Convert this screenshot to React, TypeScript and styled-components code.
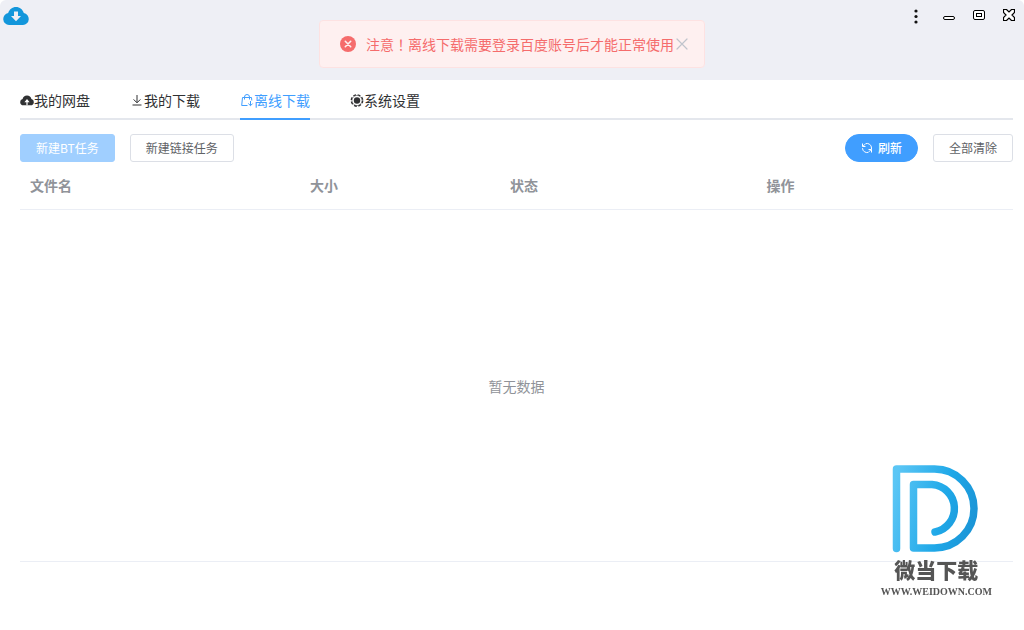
import React from "react";
import styled, { createGlobalStyle, css } from "styled-components";

const GlobalStyle = createGlobalStyle`
  * { box-sizing: border-box; }
  body {
    margin: 0;
    background: #fff;
    color: #303133;
    font: 14px/20px "Noto Sans CJK SC", sans-serif;
  }
  button { font-family: inherit; cursor: pointer; }
`;

const Window = styled.div`
  display: flex;
  flex-direction: column;
  min-height: 100vh;
`;

const TitleBar = styled.header`
  display: flex;
  justify-content: space-between;
  align-items: flex-start;
  height: 80px;
  padding: 6px 5px 0 3px;
  background: #eeeff5;
  border-radius: 6px 6px 0 0;
`;

const WindowControls = styled.div`
  display: flex;
  gap: 10px;
`;

const ControlButton = styled.button<{ $spaced?: boolean }>`
  display: flex;
  align-items: center;
  justify-content: center;
  width: 20px;
  height: 18px;
  margin-right: ${(p) => (p.$spaced ? "3px" : "0")};
  padding: 0;
  border: 0;
  background: none;
`;

const Message = styled.div`
  position: fixed;
  top: 20px;
  left: 50%;
  transform: translateX(-50%);
  display: flex;
  align-items: center;
  width: 386px;
  height: 48px;
  padding: 0 14px 0 20px;
  border: 1px solid #fde2e2;
  border-radius: 4px;
  background: #fef0f0;
  color: #f56c6c;
`;

const MessageText = styled.p`
  margin: 0 0 0 10px;
  white-space: nowrap;
`;

const CenteredMark = styled.span`
  font-family: "Noto Sans CJK TC", sans-serif;
`;

const MessageClose = styled.button`
  display: flex;
  padding: 0;
  border: 0;
  background: none;
  color: #c0c4cc;
`;

const Main = styled.main`
  flex: 1;
  padding: 0 11px 0 20px;
`;

const Tabs = styled.nav`
  display: flex;
  gap: 40px;
  height: 40px;
  box-shadow: inset 0 -2px #e4e7ed;
`;

const Tab = styled.button<{ $active?: boolean }>`
  display: flex;
  align-items: center;
  height: 40px;
  padding: 2px 0 0;
  border: 0;
  border-bottom: 2px solid ${(p) => (p.$active ? "#409eff" : "transparent")};
  background: none;
  color: ${(p) => (p.$active ? "#409eff" : "#303133")};
  font-size: 14px;
  line-height: 20px;
`;

const Toolbar = styled.div`
  display: flex;
  gap: 15px;
  padding-top: 14px;
`;

const Spacer = styled.div`
  flex: 1;
`;

const variants = {
  plain: css`
    border-color: #dcdfe6;
    background: #fff;
    color: #606266;
  `,
  muted: css`
    border-color: #a0cfff;
    background: #a0cfff;
    color: #fff;
  `,
  primary: css`
    border-color: #409eff;
    border-radius: 14px;
    background: #409eff;
    color: #fff;
    font-weight: 500;
  `,
};

const Button = styled.button<{ $variant: keyof typeof variants }>`
  display: flex;
  align-items: center;
  gap: 5px;
  height: 28px;
  padding: 0 15px;
  border: 1px solid;
  border-radius: 3px;
  font-size: 12px;
  line-height: 16px;
  white-space: nowrap;
  ${(p) => variants[p.$variant]}
`;

const Table = styled.table`
  width: 100%;
  table-layout: fixed;
  border-collapse: separate;
  border-spacing: 0;
`;

const HeadCell = styled.th<{ $width?: number }>`
  width: ${(p) => (p.$width ? `${p.$width}px` : "auto")};
  height: 48px;
  padding: 0 10px 2px;
  border-bottom: 1px solid #ebeef5;
  color: #909399;
  font-weight: 700;
  text-align: left;
`;

const EmptyCell = styled.td`
  height: calc(100vh - 278px);
  padding: 0;
  border-bottom: 1px solid #ebeef5;
  color: #909399;
  text-align: center;
`;

const Watermark = styled.div`
  position: fixed;
  right: 32px;
  bottom: 30px;
  display: flex;
  flex-direction: column;
  align-items: center;
  color: #555;
  pointer-events: none;
`;

const WatermarkName = styled.strong`
  margin-top: 4px;
  font-size: 21px;
  font-weight: 900;
  line-height: 24px;
`;

const WatermarkUrl = styled.span`
  margin-top: 3px;
  font: 700 10px/16px "Liberation Serif", serif;
`;

const LogoIcon = () => (
  <svg width="26" height="19" viewBox="0 0 26 19">
    <path
      fill="#1296db"
      d="M6 19A6 6 0 0 1 5.200 7.100C6.200 3.500 9.300 1 13 1s6.800 2.500 7.800 6.100A6 6 0 0 1 20 19z"
    />
    <path fill="#eeeff5" d="M11 5.500h4v4.500h3L13 15.200 8 10h3z" />
  </svg>
);

const MoreIcon = () => (
  <svg width="4" height="18" viewBox="0 0 4 18" fill="#111">
    <circle cx="2" cy="5" r="1.6" />
    <circle cx="2" cy="10.5" r="1.6" />
    <circle cx="2" cy="16" r="1.6" />
  </svg>
);

const MinimizeIcon = () => (
  <svg width="12" height="12" viewBox="0 0 12 12">
    <rect x=".5" y="7.5" width="11" height="3" rx="1.5" fill="#fff" stroke="#000" />
  </svg>
);

const MaximizeIcon = () => (
  <svg width="12" height="10" viewBox="0 0 12 10" fill="#fff" stroke="#000">
    <rect x=".5" y=".5" width="11" height="9" rx="1.5" />
    <rect x="3.5" y="3.5" width="5" height="3" />
  </svg>
);

const CloseIcon = () => (
  <svg width="12" height="12" viewBox="0 0 12 12">
    <path
      d="M.5.5h3L6 3l2.500-2.500h3v3L9 6l2.500 2.500v3h-3L6 9l-2.500 2.500h-3v-3L3 6 .5 3.500z"
      fill="#fff"
      stroke="#000"
      strokeWidth="1.2"
    />
  </svg>
);

const ErrorIcon = () => (
  <svg width="16" height="16" viewBox="0 0 16 16">
    <circle cx="8" cy="8" r="8" fill="#f56c6c" />
    <path d="m5.3 5.3 5.4 5.4m0-5.4-5.4 5.4" stroke="#fef0f0" strokeWidth="1.6" strokeLinecap="round" />
  </svg>
);

const DismissIcon = () => (
  <svg width="16" height="16" viewBox="0 0 16 16">
    <path d="m3 3 10 10M13 3 3 13" stroke="currentColor" strokeWidth="1.2" strokeLinecap="round" />
  </svg>
);

const CloudIcon = () => (
  <svg width="14" height="14" viewBox="0 0 14 14">
    <path fill="currentColor" d="M3.3 12.3a3.2 3.2 0 0 1-.7-6.3 4.5 4.5 0 0 1 8.8 0 3.2 3.2 0 0 1-.7 6.3z" />
    <path fill="#fff" d="M7 6 9.6 9.2H7.6v3.1H6.4V9.2h-2z" />
  </svg>
);

const DownloadIcon = () => (
  <svg width="14" height="14" viewBox="0 0 14 14" fill="none" stroke="currentColor">
    <path d="M7 2v7.6M3.6 6.4 7 9.8l3.4-3.4M2.500 12h9" />
  </svg>
);

const OfflineIcon = () => (
  <svg width="14" height="14" viewBox="0 0 14 14" fill="none" stroke="currentColor">
    <path d="M7.500 12.500H1.700L2.500 4.500h9l.3 3M4.500 6.500V4A2.500 2.500 0 0 1 7 1.500 2.500 2.500 0 0 1 9.500 4v2.500M10.500 8v4.500M8.300 10.500l2.200 2.200 2.200-2.200" />
  </svg>
);

const SettingsIcon = () => (
  <svg width="14" height="14" viewBox="0 0 14 14">
    <circle cx="7" cy="7.500" r="5.700" fill="none" stroke="currentColor" strokeWidth="1.400" strokeDasharray="2.800 1.677" />
    <circle cx="7" cy="7.500" r="5.100" fill="none" stroke="currentColor" strokeWidth=".5" />
    <circle cx="7" cy="7.500" r="3.200" fill="currentColor" />
  </svg>
);

const RefreshIcon = () => (
  <svg width="12" height="12" viewBox="0 0 12 12" fill="none" stroke="currentColor">
    <path d="M4.500 1.700A4.500 4.500 0 0 1 10.500 6v1.200M1.500 1.500v3h3M2 4.300 4 2.200M7.500 10.300A4.500 4.500 0 0 1 1.500 6.200M10.500 10.500v-3h-3M10 7.700 8 9.800" />
  </svg>
);

const WatermarkLogo = () => (
  <svg width="88" height="89" viewBox="0 0 88 89" fill="none">
    <defs>
      <linearGradient id="brand" gradientUnits="userSpaceOnUse" x1="0" y1="30" x2="86" y2="50">
        <stop offset="0" stopColor="#5bc6f5" />
        <stop offset=".6" stopColor="#1fa8e8" />
        <stop offset="1" stopColor="#1b94d6" />
      </linearGradient>
    </defs>
    <path
      d="M4.5 84.500V5H42.500a39.500 39.500 0 0 1 0 79H21.500V20.500H40a24 24 0 0 1 3 47.500"
      stroke="url(#brand)"
      strokeWidth="7.500"
      strokeLinecap="round"
      strokeLinejoin="round"
    />
  </svg>
);

const tabs = [
  { label: "我的网盘", Icon: CloudIcon },
  { label: "我的下载", Icon: DownloadIcon },
  { label: "离线下载", Icon: OfflineIcon, active: true },
  { label: "系统设置", Icon: SettingsIcon },
];

const columns = [
  { label: "文件名", width: 280 },
  { label: "大小", width: 200 },
  { label: "状态" },
  { label: "操作" },
];

export default function App() {
  return (
    <Window>
      <GlobalStyle />
      <TitleBar>
        <LogoIcon />
        <WindowControls>
          <ControlButton $spaced aria-label="菜单"><MoreIcon /></ControlButton>
          <ControlButton aria-label="最小化"><MinimizeIcon /></ControlButton>
          <ControlButton aria-label="最大化"><MaximizeIcon /></ControlButton>
          <ControlButton aria-label="关闭"><CloseIcon /></ControlButton>
        </WindowControls>
      </TitleBar>
      <Message role="alert">
        <ErrorIcon />
        <MessageText>
          注意<CenteredMark>！</CenteredMark>离线下载需要登录百度账号后才能正常使用
        </MessageText>
        <MessageClose aria-label="关闭提示"><DismissIcon /></MessageClose>
      </Message>
      <Main>
        <Tabs>
          {tabs.map(({ label, Icon, active }) => (
            <Tab key={label} $active={active}>
              <Icon />
              {label}
            </Tab>
          ))}
        </Tabs>
        <Toolbar>
          <Button $variant="muted">新建BT任务</Button>
          <Button $variant="plain">新建链接任务</Button>
          <Spacer />
          <Button $variant="primary"><RefreshIcon />刷新</Button>
          <Button $variant="plain">全部清除</Button>
        </Toolbar>
        <Table>
          <thead>
            <tr>
              {columns.map(({ label, width }) => (
                <HeadCell key={label} $width={width}>{label}</HeadCell>
              ))}
            </tr>
          </thead>
          <tbody>
            <tr>
              <EmptyCell colSpan={columns.length}>暂无数据</EmptyCell>
            </tr>
          </tbody>
        </Table>
      </Main>
      <Watermark>
        <WatermarkLogo />
        <WatermarkName>微当下载</WatermarkName>
        <WatermarkUrl>WWW.WEIDOWN.COM</WatermarkUrl>
      </Watermark>
    </Window>
  );
}
